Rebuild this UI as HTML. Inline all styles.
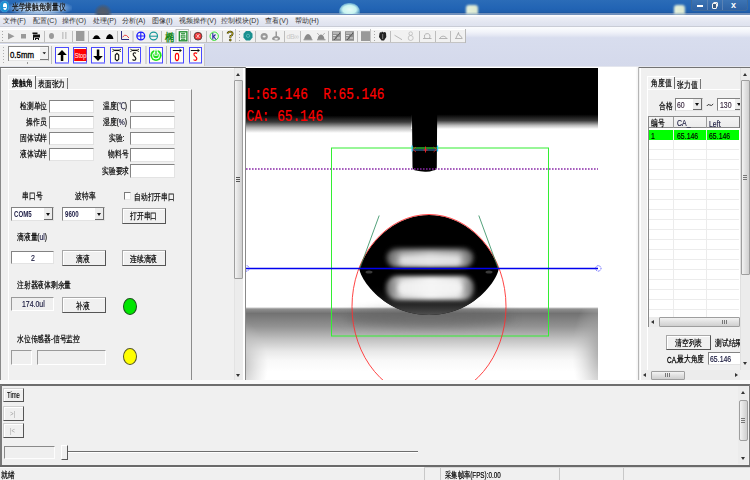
<!DOCTYPE html>
<html><head><meta charset="utf-8">
<style>
*{margin:0;padding:0;box-sizing:border-box}
html,body{width:750px;height:480px;overflow:hidden;background:#f0f0f0;font-family:"Liberation Sans",sans-serif;font-size:8px;color:#000;position:relative}
.a{position:absolute}
.t{position:absolute;white-space:nowrap;font-size:8px;line-height:9px;color:#1a1a1a}
.in{position:absolute;background:#fff;border-top:1px solid #838383;border-left:1px solid #838383;border-right:1px solid #e3e3e3;border-bottom:1px solid #e3e3e3}
.btn{position:absolute;background:#f0f0f0;border:1px solid #a8a8a8;border-right:1.5px solid #555;border-bottom:1.5px solid #555;box-shadow:inset 1px 1px 0 #fff}
.sep{position:absolute;top:30px;width:1px;height:12px;background:#c5c5c5;border-right:1px solid #fff}
.tbb{position:absolute;top:47px;width:14px;height:17px;border:1px solid #5a5aff;background:#fdfdf6}
.c{position:absolute;white-space:nowrap;font-size:9px;line-height:9px;transform:scaleX(.75);transform-origin:0 0;color:#000;-webkit-text-stroke-width:0.2px}
.n{position:absolute;white-space:nowrap;font-size:9.5px;line-height:9px;transform:scaleX(.73);transform-origin:0 0;color:#14143a;-webkit-text-stroke-width:0.15px}
.nb{position:absolute;white-space:nowrap;font-size:8.5px;line-height:9px;transform:scaleX(.72);transform-origin:0 0;color:#1e1e46;font-weight:bold}
</style></head><body>
<!-- TITLE BAR -->
<div class="a" style="left:0;top:0;width:750px;height:14px;background:linear-gradient(180deg,#2b6cb8 0%,#2264b4 60%,#1f5ca8 100%)"></div>
<div class="a" style="left:0;top:12px;width:750px;height:1px;background:#1d58a4;opacity:.8"></div>
<div class="a" style="left:0;top:13px;width:750px;height:1.5px;background:#7190bb"></div>
<div class="a" style="left:94px;top:4px;width:18px;height:12px;border-radius:9px 9px 0 0;background:radial-gradient(circle at 9px 9px,#555b66 0,#4a5a70 40%,rgba(40,90,160,0) 75%)"></div>
<div class="a" style="left:339px;top:3px;width:21px;height:11px;border-radius:10px 10px 2px 2px;background:radial-gradient(ellipse at 50% 60%,#e6fbf8 0,#c8f4f0 45%,rgba(150,220,230,.5) 70%,rgba(43,108,184,0) 100%)"></div>
<div class="a" style="left:466px;top:5px;width:12px;height:9px;border-radius:3px 3px 0 0;background:linear-gradient(90deg,#e8f2dc,#dce8d0);filter:blur(1px)"></div>
<div class="a" style="left:673.5px;top:5px;width:11px;height:9px;border-radius:3px 3px 0 0;background:linear-gradient(90deg,#e8f2dc,#dce8d0);filter:blur(1px)"></div>
<div class="a" style="left:0px;top:1px;width:9px;height:11px;border-radius:50%;background:#1c8fd2;box-shadow:0 0 1px #8ac8f0"></div>
<div class="a" style="left:2.5px;top:3px;width:4px;height:6.5px;border-radius:50% 50% 50% 50%/35% 35% 65% 65%;background:#fff"></div>
<div class="a" style="left:3px;top:6.5px;width:3px;height:1.5px;background:#3aa0e0"></div>
<div class="a" style="left:8px;top:0px;width:64px;height:14px;background:radial-gradient(ellipse 34px 8px at 32px 8px,rgba(235,245,255,.95) 0,rgba(200,225,250,.75) 55%,rgba(43,108,184,0) 100%)"></div>
<div class="c" style="left:11.5px;top:3px;font-size:9px;transform:scaleX(.74);color:#000;text-shadow:0 0 1px rgba(255,255,255,.6)">光学接触角测量仪</div>
<div class="a" style="left:691px;top:0;width:57px;height:11px;border:1px solid #3f6a9a;border-top:none;border-radius:0 0 3px 3px;background:linear-gradient(#3c74b4,#2e62a4)"></div>
<div class="a" style="left:707px;top:0;width:1px;height:10px;background:#5a82b4"></div>
<div class="a" style="left:722px;top:0;width:1px;height:10px;background:#5a82b4"></div>
<div class="a" style="left:697px;top:5px;width:6px;height:2px;background:#fff"></div>
<div class="a" style="left:713px;top:1.5px;width:5px;height:5px;border:1.2px solid #f0f0f0;border-radius:1px"></div><div class="a" style="left:711.5px;top:3px;width:5.5px;height:5.5px;border:1.5px solid #f4f4f4;background:#3a5a80;border-radius:1px"></div>
<div class="t" style="left:731px;top:1px;font-size:9px;line-height:9px;color:#fff;font-weight:bold">x</div>
<!-- MENU -->
<div class="a" style="left:0;top:14.5px;width:750px;height:12.5px;background:linear-gradient(#fdfdfe 0,#fbfbfd 10%,#eceef6 20%,#e3e6f1 60%,#dde1ee 100%)"></div>
<div class="a" style="left:0;top:26px;width:750px;height:1px;background:#c9ccd6"></div>
<div class="t" style="left:3px;top:16px;font-size:7px;color:#333">文件(F)</div>
<div class="t" style="left:33px;top:16px;font-size:7px;color:#333">配置(C)</div>
<div class="t" style="left:62px;top:16px;font-size:7px;color:#333">操作(O)</div>
<div class="t" style="left:93px;top:16px;font-size:7px;color:#333">处理(P)</div>
<div class="t" style="left:122px;top:16px;font-size:7px;color:#333">分析(A)</div>
<div class="t" style="left:152px;top:16px;font-size:7px;color:#333">图像(I)</div>
<div class="t" style="left:179px;top:16px;font-size:7px;color:#333">视频操作(V)</div>
<div class="t" style="left:221px;top:16px;font-size:7px;color:#333">控制模块(D)</div>
<div class="t" style="left:265px;top:16px;font-size:7px;color:#333">查看(V)</div>
<div class="t" style="left:295px;top:16px;font-size:7px;color:#333">帮助(H)</div>
<!-- REBAR -->
<div class="a" style="left:0;top:27px;width:750px;height:40px;background:linear-gradient(#fbfcfe 0,#f2f4fa 12%,#e6e9f4 20%,#d8ddee 27%,#d4d9eb 100%)"></div>

<!-- TOOLBAR 1 -->
<svg class="a" style="left:0;top:28px" width="467" height="16" viewBox="0 0 467 16">
<g transform="translate(0,-28)">
<rect x="0" y="29" width="236" height="14" fill="#f1f1f1"/>
<rect x="236" y="29" width="135" height="14" fill="#f1f1f1"/>
<rect x="371" y="29" width="95" height="14" fill="#f1f1f1"/>
<line x1="0" y1="29.5" x2="466" y2="29.5" stroke="#fff"/>
<line x1="0" y1="42.5" x2="466" y2="42.5" stroke="#c4c4c4"/>
<line x1="235.5" y1="29" x2="235.5" y2="43" stroke="#c4c4c4"/>
<line x1="370.5" y1="29" x2="370.5" y2="43" stroke="#c4c4c4"/>
<line x1="465.5" y1="29" x2="465.5" y2="43" stroke="#b8b8b8"/>
<g fill="#a8a8a8"><rect x="2" y="31" width="1" height="1"/><rect x="2" y="34" width="1" height="1"/><rect x="2" y="37" width="1" height="1"/><rect x="2" y="40" width="1" height="1"/>
<rect x="239" y="31" width="1" height="1"/><rect x="239" y="34" width="1" height="1"/><rect x="239" y="37" width="1" height="1"/><rect x="239" y="40" width="1" height="1"/>
<rect x="374" y="31" width="1" height="1"/><rect x="374" y="34" width="1" height="1"/><rect x="374" y="37" width="1" height="1"/><rect x="374" y="40" width="1" height="1"/></g>
<g stroke="#bdbdbd" stroke-width="1">
<line x1="44.5" y1="31" x2="44.5" y2="42"/><line x1="72.5" y1="31" x2="72.5" y2="42"/><line x1="88.5" y1="31" x2="88.5" y2="42"/><line x1="117.5" y1="31" x2="117.5" y2="42"/><line x1="133" y1="31" x2="133" y2="42"/><line x1="161.5" y1="31" x2="161.5" y2="42"/><line x1="190.5" y1="31" x2="190.5" y2="42"/><line x1="206.5" y1="31" x2="206.5" y2="42"/><line x1="222.5" y1="31" x2="222.5" y2="42"/>
<line x1="255.5" y1="31" x2="255.5" y2="42"/><line x1="284.5" y1="31" x2="284.5" y2="42"/><line x1="300.5" y1="31" x2="300.5" y2="42"/><line x1="328.5" y1="31" x2="328.5" y2="42"/><line x1="357.5" y1="31" x2="357.5" y2="42"/>
<line x1="390.5" y1="31" x2="390.5" y2="42"/><line x1="419.5" y1="31" x2="419.5" y2="42"/><line x1="435.5" y1="31" x2="435.5" y2="42"/><line x1="450.5" y1="31" x2="450.5" y2="42"/>
</g>
<!-- play stop cam -->
<path d="M8 33 L14.5 36.3 L8 39.6Z" fill="#9a9a9a"/>
<rect x="21" y="34" width="5" height="4.5" fill="#9a9a9a"/>
<path d="M32.5 32.5h5v1.5h-5z M33 34.5h7v3h-6v2.5h-1z M35 38h4v2h-1v-1h-2v1h-1z" fill="#111"/>
<ellipse cx="51.5" cy="36" rx="2.5" ry="3" fill="#9a9a9a"/>
<rect x="62" y="32" width="1.6" height="7" fill="#c8c8c8"/><rect x="65" y="32" width="1.6" height="7" fill="#c8c8c8"/>
<rect x="76" y="31" width="8.4" height="10" fill="#9a9a9a"/>
<path d="M92 39 Q93 39 94 36.5 Q96.5 34 99 36.5 Q100 39 101.2 39Z" fill="#000"/>
<path d="M106 39 Q106.5 35 109.7 34 Q113 35 113.4 39Z" fill="#000"/>
<!-- chart -->
<path d="M121.5 31v8.5h7.5" stroke="#2a2a80" fill="none" stroke-width="1"/>
<path d="M122.5 37.3 Q124.5 34 126.5 35.5 T128.8 38" stroke="#e03030" fill="none" stroke-width="0.9"/>
<circle cx="140.8" cy="36" r="3.9" stroke="#1a1aff" stroke-width="1.3" fill="none"/>
<path d="M136.9 36h7.8M140.8 32.1v7.8" stroke="#1a1aff" stroke-width="1.1"/>
<circle cx="153.6" cy="36" r="3.9" stroke="#1a9a9a" stroke-width="1.2" fill="none"/>
<path d="M149.7 36.2h7.8" stroke="#1a9a9a" stroke-width="1.1"/>
<text x="164.8" y="40.6" font-size="11" font-weight="bold" fill="#1a8a1a" font-family="Liberation Sans" textLength="9.5" lengthAdjust="spacingAndGlyphs">椭</text>
<rect x="176" y="29.5" width="12.5" height="13" fill="#fafafa" stroke="#b0b0b0" stroke-width="0.8"/>
<rect x="179.3" y="31.8" width="7.6" height="9" fill="#eaf6ea" stroke="#1a8a2a" stroke-width="1.3"/>
<path d="M181 33.5h4M181.3 35h3.5v3h-3.5z M183 35v3M181 39.5h4.2" stroke="#1a8a2a" stroke-width="0.8" fill="none"/>
<circle cx="198" cy="36.2" r="3.9" fill="#ef3a3a" stroke="#3a3a3a" stroke-width="0.8"/>
<path d="M196.5 34.5l3 3.5M199.5 34l-3 4" stroke="#fff" stroke-width="0.7"/>
<circle cx="214.2" cy="36.2" r="4.2" stroke="#1ee01e" stroke-width="0.9" fill="none"/>
<path d="M212.8 33v6.5M213 37l2.5-2.5M213.5 36.5l2.5 3" stroke="#2a2aa0" stroke-width="1.1" fill="none"/>
<path d="M227.5 33.5 Q228 31.5 230.5 31.6 Q233 32 232.5 34.2 Q232 35.5 230.5 36 L230.3 38" stroke="#1a1a00" stroke-width="1.8" fill="none"/>
<path d="M227.5 33.5 Q228 31.5 230.5 31.6 Q233 32 232.5 34.2 Q232 35.5 230.5 36 L230.3 38" stroke="#e6d020" stroke-width="0.8" fill="none"/>
<circle cx="230.3" cy="40" r="1" fill="#c8b000" stroke="#1a1a00" stroke-width="0.6"/>
<!-- tb1b -->
<path d="M246 31h4l2.5 2.8v3.8L250 40.5h-4l-2.5-2.9v-3.8z" fill="#1a9090"/>
<circle cx="248" cy="35.8" r="1.6" fill="none" stroke="#7ad0d0" stroke-width="0.6"/>
<circle cx="264.2" cy="36.5" r="3.6" fill="#999"/><ellipse cx="264.2" cy="36.5" rx="1.6" ry="1.1" fill="#f1f1f1"/>
<path d="M275.5 31.5h1.5v4.5 Q280.5 37 280 39 Q279.5 40.5 276 40.5 Q272 40.5 272 38.8 Q272 37 275.5 36z" fill="#999"/>
<ellipse cx="276.2" cy="38.8" rx="1.8" ry="0.9" fill="#f1f1f1"/>
<text x="286.5" y="39" font-size="7" fill="#c8c8c8" font-family="Liberation Sans" letter-spacing="-0.5">dB&#8734;</text>
<path d="M304 39.5 Q305 34.5 308 34 Q311 34.5 312 39.5Z" fill="#8a8a8a"/><rect x="303.5" y="39.3" width="9" height="1" fill="#8a8a8a"/>
<path d="M317.5 39.5 Q318 35 321 34.5 Q324 35 324.5 39.5Z" fill="#8a8a8a"/><rect x="317" y="39.3" width="8.5" height="1" fill="#8a8a8a"/>
<path d="M317.2 33l2 2.2M324.8 33l-2 2.2" stroke="#8a8a8a" stroke-width="0.6"/>
<rect x="332" y="31.2" width="9" height="9.6" fill="#8f8f8f"/>
<path d="M333 33h6M333 35.5h3M333 38h2M337 38h3" stroke="#f0f0f0" stroke-width="0.8"/><path d="M334 40l6-7" stroke="#555" stroke-width="1"/>
<rect x="345" y="31.2" width="9" height="9.6" fill="#8f8f8f"/>
<path d="M346 33h6M346 35.5h3M346 38h2M350 38h3" stroke="#f0f0f0" stroke-width="0.8"/><path d="M347 40l6-7" stroke="#555" stroke-width="1"/>
<rect x="361" y="31.2" width="9" height="9.8" fill="#999"/>
<!-- tb1c -->
<path d="M379.5 33.5 Q380 31.5 381.5 32.5 L382 31.5 L383.5 32.5 Q385 31.5 386 33 L386.3 37 L384 40.5 L381.5 40.5 L379 37z" fill="#222"/>
<path d="M382.7 34v5" stroke="#ddd" stroke-width="0.5"/>
<path d="M394.5 35.2l7.5 4.5" stroke="#aaa" stroke-width="0.8"/>
<circle cx="410.7" cy="33.6" r="1.8" fill="none" stroke="#b5b5b5" stroke-width="0.7"/><circle cx="410.7" cy="38" r="2.5" fill="none" stroke="#b5b5b5" stroke-width="0.7"/>
<path d="M423 38.5h8.5M424.8 38.2 Q423.5 33.8 427.2 33.6 Q431 33.8 429.6 38.2" stroke="#999" fill="none" stroke-width="0.7"/>
<path d="M439 38.5h8.5M440 37.8 Q443 34.5 446.5 37.8" stroke="#999" fill="none" stroke-width="0.7"/>
<path d="M455 38.5h7.5M456 38 L458.5 32.5 L459 35 Q461.5 36 462 38" stroke="#999" fill="none" stroke-width="0.7"/>
</g>
</svg>
<!-- TOOLBAR 2 -->
<svg class="a" style="left:0;top:43px" width="206" height="25" viewBox="0 0 206 25">
<g transform="translate(0,-43)">
<rect x="0" y="44" width="205" height="22.5" fill="#f2f2f2"/>
<line x1="0" y1="44.5" x2="205" y2="44.5" stroke="#fcfcfc"/>
<line x1="204.5" y1="44" x2="204.5" y2="66" stroke="#c8c8c8"/>
<g fill="#b0b0b0"><rect x="3" y="47" width="1" height="1"/><rect x="3" y="50" width="1" height="1"/><rect x="3" y="53" width="1" height="1"/><rect x="3" y="56" width="1" height="1"/><rect x="3" y="59" width="1" height="1"/><rect x="3" y="62" width="1" height="1"/></g>
<rect x="8.5" y="46.5" width="40" height="14" fill="#fff" stroke="#8a8a8a" stroke-width="1"/>
<line x1="9" y1="60.5" x2="48.5" y2="60.5" stroke="#e5e5e5"/>
<rect x="40" y="47.5" width="8" height="12.5" fill="#f0f0f0"/>
<line x1="40" y1="59.5" x2="48" y2="59.5" stroke="#777"/>
<path d="M42.5 52.3h3.5l-1.75 2z" fill="#111"/>
<text x="10" y="57.6" font-size="8.8" font-family="Liberation Sans" fill="#000" stroke="#000" stroke-width="0.3" textLength="24" lengthAdjust="spacingAndGlyphs">0.5mm</text>
<rect x="27" y="62" width="1" height="2" fill="#999"/>
<line x1="51.5" y1="46" x2="51.5" y2="64" stroke="#bdbdbd"/>
<line x1="146" y1="46" x2="146" y2="64" stroke="#bdbdbd"/>
<line x1="166.5" y1="46" x2="166.5" y2="64" stroke="#bdbdbd"/>
<g stroke="#4a4aff" stroke-width="1" fill="#fefef4">
<rect x="55.5" y="47.5" width="13" height="15.5"/>
<rect x="73.5" y="47.5" width="13" height="15.5"/>
<rect x="91.5" y="47.5" width="13" height="15.5"/>
<rect x="110.5" y="47.5" width="12" height="15.5"/>
<rect x="128.5" y="47.5" width="12" height="15.5"/>
<rect x="149.5" y="47.5" width="13" height="15.5"/>
<rect x="170.5" y="47.5" width="13" height="15.5"/>
<rect x="189.5" y="47.5" width="12" height="15.5"/>
</g>
<g fill="#9a9aff"><rect x="56" y="62" width="12.5" height="1.5"/><rect x="74" y="62" width="12.5" height="1.5"/><rect x="92" y="62" width="12.5" height="1.5"/><rect x="111" y="62" width="11.5" height="1.5"/><rect x="129" y="62" width="11.5" height="1.5"/><rect x="150" y="62" width="12" height="1.5"/><rect x="171.5" y="62" width="11.5" height="1.5"/><rect x="189.5" y="62" width="11.5" height="1.5"/></g>
<path d="M62 50 L66.8 55 H63.3 V61 H60.8 V55 H57.2Z" fill="#000"/>
<rect x="74.2" y="49" width="12.2" height="12" fill="#ff0000"/>
<text x="74.8" y="57.6" font-size="8" fill="#fff" font-family="Liberation Sans" textLength="11.5" lengthAdjust="spacingAndGlyphs">Stop</text>
<path d="M98 61 L102.8 56 H99.3 V49.5 H96.8 V56 H93.2Z" fill="#000"/>
<path d="M112.3 49.1l2.3 1.3-2.3 1.2M121 49.1l-2.3 1.3 2.3 1.2M114.3 50.4h4.7" stroke="#111" stroke-width="0.8" fill="none"/><path d="M114.3 50.4h4.7" stroke="#111" stroke-width="1.3"/>
<path d="M117 53.3 L118.7 55 V59.2 L117 60.8 L115.3 59.2 V55Z" fill="none" stroke="#111" stroke-width="1.1"/>
<path d="M130.3 49.1l2.3 1.3-2.3 1.2M139 49.1l-2.3 1.3 2.3 1.2M132.3 50.4h4.7" stroke="#111" stroke-width="0.8" fill="none"/><path d="M132.3 50.4h4.7" stroke="#111" stroke-width="1.3"/>
<path d="M136 53.3 Q134.5 52.2 133.3 53.3 Q132.5 55 134.5 56.5 Q136.5 58 135.5 59.7 Q134 60.8 132.5 59.5" stroke="#111" stroke-width="1.1" fill="none"/>
<circle cx="156" cy="55.3" r="5.6" fill="#1ee01e"/>
<circle cx="156" cy="55.6" r="3.3" fill="none" stroke="#ffffff" stroke-width="1.1"/>
<rect x="154.3" y="49.8" width="3.4" height="6" fill="#ffffff"/>
<rect x="155.3" y="50.5" width="1.4" height="4.6" fill="#1ee01e"/>
<path d="M172.8 50.5h8.5M179.5 49.2l1.8 1.3-1.8 1.3" stroke="#111" stroke-width="1" fill="none"/>
<ellipse cx="177" cy="57" rx="1.7" ry="3.6" fill="none" stroke="#ff0000" stroke-width="1.1"/>
<path d="M190.8 50.5h8.5M197.5 49.2l1.8 1.3-1.8 1.3" stroke="#111" stroke-width="1" fill="none"/>
<path d="M197 53.5 Q195.5 52.3 194 53.5 Q193.3 55 195.5 56.6 Q197.5 58 196.5 59.8 Q195 61 193.5 59.7" stroke="#ff0000" stroke-width="1.1" fill="none"/>
</g>
</svg>
<div class="a" style="left:0;top:66px;width:750px;height:1px;background:#e4e6ee"></div>
<!-- LEFT PANEL -->
<div class="a" style="left:0;top:67px;width:246px;height:1px;background:#737373"></div>
<div class="a" style="left:0;top:68px;width:1px;height:312px;background:#8a8a8a"></div>
<div class="a" style="left:1px;top:68px;width:244px;height:1px;background:#fff"></div>
<!-- tabs -->
<div class="a" style="left:8px;top:75px;width:28px;height:15px;background:#f3f3f3;border-top:1px solid #fff;border-left:1px solid #fff"></div>
<div class="a" style="left:35px;top:76px;width:1px;height:14px;background:#6a6a6a"></div>
<div class="a" style="left:36px;top:77px;width:32px;height:1px;background:#fff"></div>
<div class="a" style="left:67px;top:78px;width:1px;height:11px;background:#777"></div>
<div class="c" style="left:12px;top:79px;-webkit-text-stroke-width:0.35px">接触角</div>
<div class="c" style="left:38px;top:80px">表面张力</div>
<!-- tab page -->
<div class="a" style="left:8px;top:89px;width:184px;height:291px;border-left:1px solid #fff;border-top:1px solid #fff;border-right:1px solid #8c8c8c"></div>
<div class="a" style="left:68px;top:89px;width:123px;height:1px;background:#fff"></div>
<!-- labels left col -->
<div class="c" style="left:19.5px;top:102px">检测单位</div>
<div class="c" style="left:26px;top:118px">操作员</div>
<div class="c" style="left:19.5px;top:134px">固体试样</div>
<div class="c" style="left:19.5px;top:150px">液体试样</div>
<div class="in" style="left:49px;top:100px;width:45px;height:13px"></div>
<div class="in" style="left:49px;top:116px;width:45px;height:13px"></div>
<div class="in" style="left:49px;top:132px;width:45px;height:13px"></div>
<div class="in" style="left:49px;top:148px;width:45px;height:13px"></div>
<!-- labels right col -->
<div class="c" style="left:103px;top:102px">温度(<span style="color:#1a1a3a">℃</span>)</div>
<div class="c" style="left:103px;top:118px">湿度(<span style="color:#1a1a3a">%</span>)</div>
<div class="c" style="left:108.5px;top:134px">实验:</div>
<div class="c" style="left:108px;top:150px">物料号</div>
<div class="c" style="left:101.5px;top:166.5px">实验要求</div>
<div class="in" style="left:130px;top:100px;width:45px;height:13px"></div>
<div class="in" style="left:130px;top:116px;width:45px;height:13px"></div>
<div class="in" style="left:130px;top:132px;width:45px;height:13px"></div>
<div class="in" style="left:130px;top:148px;width:45px;height:14px"></div>
<div class="in" style="left:130px;top:164px;width:45px;height:14px"></div>
<!-- serial -->
<div class="c" style="left:21.5px;top:192px">串口号</div>
<div class="c" style="left:75px;top:192px">波特率</div>
<div class="in" style="left:11px;top:207px;width:43px;height:14px"></div>
<div class="nb" style="left:13.7px;top:210px">COM5</div>
<div class="a" style="left:44px;top:208px;width:9px;height:12px;background:#ececec;border-bottom:1px solid #6a6a6a;border-right:1px solid #6a6a6a"></div>
<div class="a" style="left:46px;top:213px;width:0;height:0;border-left:2.5px solid transparent;border-right:2.5px solid transparent;border-top:3px solid #111"></div>
<div class="in" style="left:62px;top:207px;width:43px;height:14px"></div>
<div class="nb" style="left:64.7px;top:210px">9600</div>
<div class="a" style="left:95px;top:208px;width:9px;height:12px;background:#ececec;border-bottom:1px solid #6a6a6a;border-right:1px solid #6a6a6a"></div>
<div class="a" style="left:97px;top:213px;width:0;height:0;border-left:2.5px solid transparent;border-right:2.5px solid transparent;border-top:3px solid #111"></div>
<div class="a" style="left:123.5px;top:192px;width:7px;height:8px;border:1px solid #7a7a7a;border-right-color:#e8e8e8;border-bottom-color:#e8e8e8;background:#fff"></div>
<div class="c" style="left:133.5px;top:192.5px">自动打开串口</div>
<div class="btn" style="left:122px;top:207.5px;width:43.5px;height:16.5px"></div>
<div class="c" style="left:129.5px;top:211.5px">打开串口</div>
<!-- drop volume -->
<div class="c" style="left:17px;top:233px">滴液量(<span style="color:#1e1e46">ul</span>)</div>
<div class="in" style="left:11px;top:251px;width:43px;height:13px"></div>
<div class="n" style="left:31px;top:253px">2</div>
<div class="btn" style="left:62px;top:250px;width:43.5px;height:16px"></div>
<div class="c" style="left:75.5px;top:254.5px">滴液</div>
<div class="btn" style="left:122px;top:250px;width:43.5px;height:16px"></div>
<div class="c" style="left:129.5px;top:254.5px">连续滴液</div>
<!-- syringe -->
<div class="c" style="left:16.5px;top:281px">注射器液体剩余量</div>
<div class="a" style="left:11px;top:297px;width:43px;height:14px;background:#efefef;border-top:1px solid #9a9a9a;border-left:1px solid #9a9a9a;border-right:1px solid #fff;border-bottom:1px solid #fff"></div>
<div class="n" style="left:21.7px;top:299px">174.0ul</div>
<div class="btn" style="left:62px;top:296.5px;width:43.5px;height:16.5px"></div>
<div class="c" style="left:75.5px;top:301.5px">补液</div>
<div class="a" style="left:123px;top:298px;width:14px;height:17px;border-radius:50%;background:#00e600;border:1.5px solid #1f4f1f"></div>
<!-- water sensor -->
<div class="c" style="left:16.5px;top:334.5px">水位传感器-信号监控</div>
<div class="a" style="left:11px;top:350px;width:21px;height:15px;background:#efefef;border-top:1px solid #9a9a9a;border-left:1px solid #9a9a9a;border-right:1px solid #fff;border-bottom:1px solid #fff"></div>
<div class="a" style="left:37px;top:350px;width:69px;height:15px;background:#efefef;border-top:1px solid #9a9a9a;border-left:1px solid #9a9a9a;border-right:1px solid #fff;border-bottom:1px solid #fff"></div>
<div class="a" style="left:123px;top:348px;width:14px;height:17px;border-radius:50%;background:#ffff00;border:1.5px solid #55552a"></div>
<!-- scrollbar -->
<div class="a" style="left:234px;top:68px;width:9px;height:312px;background:#ececec;border-left:1px solid #e3e3e3"></div>
<div class="a" style="left:236px;top:73px;width:0;height:0;border-left:2.5px solid transparent;border-right:2.5px solid transparent;border-bottom:3px solid #333"></div>
<div class="a" style="left:234px;top:80px;width:9px;height:199px;border:1px solid #9e9e9e;border-radius:1px;background:linear-gradient(90deg,#f3f3f3,#e0e0e0 50%,#cfcfcf)"></div>
<div class="a" style="left:235.8px;top:176.5px;width:4px;height:5px;background:repeating-linear-gradient(180deg,#555 0,#555 1px,transparent 1px,transparent 2px)"></div>
<div class="a" style="left:236px;top:373.5px;width:0;height:0;border-left:2.5px solid transparent;border-right:2.5px solid transparent;border-top:3px solid #333"></div>
<div class="a" style="left:243px;top:68px;width:2px;height:312px;background:#fff"></div>
<div class="a" style="left:245px;top:67px;width:1px;height:313px;background:#8a8a8a"></div>
<div class="a" style="left:0;top:380px;width:750px;height:4px;background:#fafafa"></div>
<div class="a" style="left:0;top:384px;width:750px;height:1px;background:#6e6e6e"></div>
<!-- IMAGE AREA -->
<svg class="a" style="left:246px;top:67px" width="393" height="313" viewBox="246 67 393 313">
<defs>
<linearGradient id="topg" x1="0" y1="0" x2="0" y2="1" gradientUnits="objectBoundingBox">
<stop offset="0" stop-color="#000"/><stop offset="0.73" stop-color="#000"/><stop offset="0.83" stop-color="#3a3a3a"/><stop offset="0.92" stop-color="#b8b8b8"/><stop offset="1" stop-color="#fff"/>
</linearGradient>
<linearGradient id="topg2" x1="0" y1="0" x2="0" y2="1"><stop offset="0" stop-color="#000"/><stop offset="0.76" stop-color="#000"/><stop offset="0.86" stop-color="#3a3a3a"/><stop offset="0.94" stop-color="#bbb"/><stop offset="1" stop-color="#fff"/></linearGradient>
<linearGradient id="subg" x1="0" y1="307" x2="0" y2="372" gradientUnits="userSpaceOnUse">
<stop offset="0" stop-color="#fff"/><stop offset="0.03" stop-color="#909090"/><stop offset="0.1" stop-color="#727272"/><stop offset="0.3" stop-color="#929292"/><stop offset="0.5" stop-color="#c2c2c2"/><stop offset="0.68" stop-color="#e8e8e8"/><stop offset="0.82" stop-color="#f8f8f8"/><stop offset="1" stop-color="#fff"/>
</linearGradient>
<radialGradient id="subr" cx="0" cy="0" r="1" gradientUnits="userSpaceOnUse" gradientTransform="translate(606 352) scale(34 62)">
<stop offset="0" stop-color="#888" stop-opacity="0.9"/><stop offset="0.5" stop-color="#aaa" stop-opacity="0.5"/><stop offset="1" stop-color="#ccc" stop-opacity="0"/>
</radialGradient>
<radialGradient id="subl" cx="0" cy="0" r="1" gradientUnits="userSpaceOnUse" gradientTransform="translate(238 365) scale(30 45)">
<stop offset="0" stop-color="#9a9a9a" stop-opacity="0.8"/><stop offset="0.5" stop-color="#b8b8b8" stop-opacity="0.45"/><stop offset="1" stop-color="#c8c8c8" stop-opacity="0"/>
</radialGradient>
<linearGradient id="dropbot" x1="0" y1="285" x2="0" y2="316" gradientUnits="userSpaceOnUse">
<stop offset="0" stop-color="#000" stop-opacity="0"/><stop offset="0.45" stop-color="#1a1a1a" stop-opacity="0.8"/><stop offset="0.8" stop-color="#3a3a3a" stop-opacity="1"/><stop offset="1" stop-color="#555" stop-opacity="1"/>
</linearGradient>
<filter id="bl1" x="-30%" y="-80%" width="160%" height="260%"><feGaussianBlur stdDeviation="3"/></filter><filter id="bl3" x="-30%" y="-150%" width="160%" height="400%"><feGaussianBlur stdDeviation="5"/></filter><filter id="bl0" x="-10%" y="-100%" width="120%" height="300%"><feGaussianBlur stdDeviation="0.6"/></filter>
<filter id="bl2" x="-30%" y="-80%" width="160%" height="260%"><feGaussianBlur stdDeviation="2"/></filter>
</defs>
<rect x="246" y="67" width="393" height="313" fill="#fff"/>
<!-- top black band -->
<rect x="246" y="68" width="166" height="65" fill="url(#topg)"/>
<rect x="411" y="68" width="187" height="61" fill="url(#topg2)"/>
<!-- substrate -->
<rect x="246" y="307" width="352" height="73" fill="url(#subg)" filter="url(#bl0)"/>
<rect x="246" y="308" width="352" height="72" fill="url(#subr)"/>
<rect x="246" y="308" width="352" height="72" fill="url(#subl)"/>
<ellipse id="undrop" cx="429" cy="318" rx="85" ry="9" fill="#5a5a5a" filter="url(#bl3)" opacity="0.5"/>
<!-- needle -->
<path d="M411.5 68 H437.5 L436.8 167.5 Q436.5 170.5 433 170.5 Q430 172 425 171.8 Q420 171.5 416 170.5 Q412.8 170.2 412.5 167Z" fill="#000"/>
<!-- drop -->
<path d="M359.3 268 A77 92 0 0 1 498.7 268 C498.5 275 489 291 471 303 C459 311 443 315 429 315 C415 315 399 311 387 303 C369 291 359.5 275 359.3 268Z" fill="#000"/>
<path d="M359.3 268 A77 92 0 0 1 498.7 268 C498.5 275 489 291 471 303 C459 311 443 315 429 315 C415 315 399 311 387 303 C369 291 359.5 275 359.3 268Z" fill="url(#dropbot)"/>
<!-- highlights -->
<defs>
<linearGradient id="hlx" x1="0" y1="0" x2="1" y2="0">
<stop offset="0" stop-color="#555"/><stop offset="0.18" stop-color="#bdbdbd"/><stop offset="0.5" stop-color="#dedede"/><stop offset="0.82" stop-color="#c8c8c8"/><stop offset="1" stop-color="#555"/>
</linearGradient>
<linearGradient id="hltop" x1="0" y1="0" x2="0" y2="1"><stop offset="0" stop-color="#000" stop-opacity="0.45"/><stop offset="1" stop-color="#000" stop-opacity="0"/></linearGradient>
<linearGradient id="hlx2" x1="0" y1="0" x2="1" y2="0">
<stop offset="0" stop-color="#666"/><stop offset="0.18" stop-color="#d0d0d0"/><stop offset="0.5" stop-color="#f4f4f4"/><stop offset="0.82" stop-color="#e0e0e0"/><stop offset="1" stop-color="#666"/>
</linearGradient>
</defs>
<rect x="386.5" y="248.5" width="87" height="18.5" rx="9" ry="8.5" fill="url(#hlx)" filter="url(#bl2)"/>
<rect x="400" y="256" width="60" height="9" rx="4" fill="#e8e8e8" opacity="0.75" filter="url(#bl2)"/>
<rect x="386" y="246" width="88" height="10" fill="url(#hltop)" filter="url(#bl2)"/>
<rect x="386" y="276" width="88" height="24" rx="11" ry="11" fill="url(#hlx2)" filter="url(#bl2)"/>
<rect x="398" y="281" width="64" height="14" rx="6" fill="#f6f6f6" opacity="0.8" filter="url(#bl2)"/>
<ellipse cx="369" cy="272" rx="3.5" ry="1.6" fill="#3a3a3a" filter="url(#bl0)"/>
<ellipse cx="489" cy="272" rx="3.5" ry="1.6" fill="#3a3a3a" filter="url(#bl0)"/>
<!-- text -->
<text x="246.5" y="99" font-family="Liberation Mono" font-size="16.5" fill="#ff0000" textLength="138" lengthAdjust="spacingAndGlyphs" stroke="#ff0000" stroke-width="0.2">L:65.146&#160;&#160;R:65.146</text>
<text x="246.5" y="121" font-family="Liberation Mono" font-size="16.5" fill="#ff0000" textLength="76.6" lengthAdjust="spacingAndGlyphs" stroke="#ff0000" stroke-width="0.2">CA:&#160;65.146</text>
<!-- purple dotted -->
<line x1="246" y1="169" x2="598" y2="169" stroke="#8a2aa8" stroke-width="1.3" stroke-dasharray="1.6 1.4"/>
<!-- green rect -->
<rect x="331.5" y="148" width="217" height="188" fill="none" stroke="#33ee33" stroke-width="1"/>
<!-- needle marks -->
<line x1="412" y1="148" x2="437" y2="148" stroke="#228822" stroke-width="1.5"/>
<line x1="413" y1="150" x2="437" y2="150" stroke="#2a6a9a" stroke-width="1.3"/>
<path d="M425.5 146.5v6M423.5 150h4" stroke="#ff2020" stroke-width="0.9"/>
<path d="M416 147l-3 2.5 3 2.5M433.5 147l3 2.5-3 2.5" stroke="#ff2020" stroke-width="0.7" fill="none"/>
<rect x="411.5" y="145.5" width="1.2" height="6" fill="#30d0ff"/><rect x="437" y="145.5" width="1.2" height="6" fill="#30d0ff"/>
<!-- red ellipse -->
<ellipse cx="429" cy="306.5" rx="77" ry="92" fill="none" stroke="#ff3030" stroke-width="0.9"/>
<!-- blue line -->
<line x1="246" y1="268.5" x2="598" y2="268.5" stroke="#0000ee" stroke-width="1.5"/>
<circle cx="598.3" cy="268.4" r="2.7" fill="none" stroke="#2020ff" stroke-width="0.8" stroke-dasharray="1 0.8"/>
<circle cx="246.5" cy="268.4" r="2.7" fill="none" stroke="#2020ff" stroke-width="0.8" stroke-dasharray="1 0.8"/>
<!-- tangents -->
<line x1="360" y1="268" x2="379.2" y2="215.5" stroke="#2a8a5a" stroke-width="0.8"/>
<line x1="498" y1="268" x2="478.8" y2="215.5" stroke="#2a8a5a" stroke-width="0.8"/>
<!-- borders -->

<rect x="636.5" y="67" width="2" height="313" fill="#f6f6f6"/>
<rect x="638.5" y="67" width="1.5" height="313" fill="#707070"/>
</svg>
<!-- RIGHT PANEL -->
<div class="a" style="left:639px;top:67px;width:111px;height:1px;background:#737373"></div>
<div class="a" style="left:640px;top:68px;width:110px;height:312px;background:#f0f0f0;border-left:1px solid #fff"></div>
<!-- tabs -->
<div class="a" style="left:647px;top:76px;width:28px;height:14px;background:#f3f3f3;border-top:1px solid #fff;border-left:1px solid #fff"></div>
<div class="a" style="left:674px;top:77px;width:1px;height:13px;background:#6a6a6a"></div>
<div class="a" style="left:675px;top:78px;width:26px;height:1px;background:#fff"></div>
<div class="a" style="left:700px;top:79px;width:1px;height:10px;background:#777"></div>
<div class="c" style="left:650.5px;top:79px">角度值</div>
<div class="c" style="left:677px;top:80.5px">张力值</div>
<div class="a" style="left:647px;top:89px;width:93px;height:1px;background:#fff"></div>
<div class="a" style="left:647px;top:89px;width:1px;height:291px;background:#fff"></div>
<!-- 合格 -->
<div class="c" style="left:658.5px;top:101.5px">合格</div>
<div class="in" style="left:674.5px;top:98px;width:28px;height:13px"></div>
<div class="n" style="left:677px;top:100.3px;color:#3a2a40">60</div>
<div class="a" style="left:693px;top:99px;width:9px;height:11px;background:#ececec;border-bottom:1px solid #6a6a6a;border-right:1px solid #6a6a6a"></div>
<div class="a" style="left:695px;top:103px;width:0;height:0;border-left:2.5px solid transparent;border-right:2.5px solid transparent;border-top:3px solid #111"></div>
<svg class="a" style="left:706px;top:102px" width="8" height="6"><path d="M0.8 4 Q2 1.6 3.8 3 Q5.6 4.4 7.2 2" stroke="#333" stroke-width="1" fill="none"/></svg>
<div class="in" style="left:716.5px;top:98px;width:24px;height:13px;border-right:none"></div>
<div class="n" style="left:719.6px;top:100px;color:#3a2a40">130</div>
<div class="a" style="left:735px;top:99px;width:5px;height:11px;background:#ececec;border-bottom:1px solid #6a6a6a"></div>
<div class="a" style="left:737px;top:103px;width:0;height:0;border-left:2.5px solid transparent;border-right:2.5px solid transparent;border-top:3px solid #111"></div>
<!-- table -->
<div class="a" style="left:647.5px;top:116px;width:92px;height:211px;background:#fff;border-left:1px solid #8a8a8a;border-top:1px solid #8a8a8a"></div>
<div class="a" style="left:648.5px;top:117px;width:90.5px;height:11px;background:linear-gradient(#f4f4f4,#ececec);border-bottom:1px solid #8a8a8a"></div>
<div class="a" style="left:672.5px;top:117px;width:1px;height:11px;background:#9a9a9a"></div>
<div class="a" style="left:705.5px;top:117px;width:1px;height:11px;background:#9a9a9a"></div>
<div class="a" style="left:738.5px;top:117px;width:1px;height:11px;background:#777"></div>
<div class="c" style="left:651px;top:119px">编号</div>
<div class="n" style="left:676.7px;top:118px">CA_</div>
<div class="n" style="left:709.3px;top:119px">Left</div>
<div class="a" style="left:648.5px;top:129.5px;width:90.5px;height:10.5px;background:#00ff00"></div>
<div class="n" style="left:651px;top:131.4px;color:#000">1</div>
<div class="n" style="left:676.7px;top:131.4px;color:#000">65.146</div>
<div class="n" style="left:709.3px;top:131.4px;color:#000">65.146</div>
<div class="a" style="left:648.5px;top:140px;width:90.5px;height:176px;background:repeating-linear-gradient(180deg,#fff 0,#fff 9px,#ececec 9px,#ececec 10px)"></div>
<div class="a" style="left:672.5px;top:129.5px;width:1px;height:187px;background:#ececec"></div>
<div class="a" style="left:705.5px;top:129.5px;width:1px;height:187px;background:#ececec"></div>
<!-- table hscroll -->
<div class="a" style="left:648.5px;top:316.5px;width:91px;height:10.5px;background:#ececec"></div>
<div class="a" style="left:651px;top:320px;width:0;height:0;border-top:2.5px solid transparent;border-bottom:2.5px solid transparent;border-right:3px solid #333"></div>
<div class="a" style="left:658.5px;top:317px;width:81px;height:9.5px;border:1px solid #9e9e9e;border-radius:1px;background:linear-gradient(#f3f3f3,#e0e0e0 50%,#cfcfcf)"></div>
<div class="a" style="left:722px;top:319.5px;width:5px;height:4px;background:repeating-linear-gradient(90deg,#777 0,#777 1px,transparent 1px,transparent 2px)"></div>
<!-- buttons -->
<div class="btn" style="left:665.5px;top:335px;width:45px;height:15px"></div>
<div class="c" style="left:674.5px;top:339px">清空列表</div>
<div class="c" style="left:715px;top:339px">测试结果</div>
<div class="n" style="left:666.5px;top:354.5px;transform:scaleX(.68);color:#000;-webkit-text-stroke-width:0.3px">CA.</div>
<div class="c" style="left:676.5px;top:355px">最大角度</div>
<div class="in" style="left:708px;top:351.5px;width:33px;height:13px;border-right:none"></div>
<div class="n" style="left:710.4px;top:354.2px">65.146</div>
<!-- panel hscroll -->
<div class="a" style="left:641px;top:370px;width:99px;height:10px;background:#ececec"></div>
<div class="a" style="left:643px;top:373px;width:0;height:0;border-top:2.5px solid transparent;border-bottom:2.5px solid transparent;border-right:3px solid #333"></div>
<div class="a" style="left:650.5px;top:370.5px;width:34.5px;height:9.5px;border:1px solid #9e9e9e;border-radius:1px;background:linear-gradient(#f3f3f3,#e0e0e0 50%,#cfcfcf)"></div>
<div class="a" style="left:665px;top:373px;width:5px;height:4px;background:repeating-linear-gradient(90deg,#777 0,#777 1px,transparent 1px,transparent 2px)"></div>
<div class="a" style="left:734.5px;top:373px;width:0;height:0;border-top:2.5px solid transparent;border-bottom:2.5px solid transparent;border-left:3px solid #333"></div>
<!-- vscroll -->
<div class="a" style="left:740px;top:68px;width:10px;height:302px;background:#ececec;border-left:1px solid #e0e0e0"></div>
<div class="a" style="left:742.5px;top:72.5px;width:0;height:0;border-left:2.5px solid transparent;border-right:2.5px solid transparent;border-bottom:3px solid #333"></div>
<div class="a" style="left:740.5px;top:80px;width:9px;height:194.5px;border:1px solid #9e9e9e;border-radius:1px;background:linear-gradient(90deg,#f3f3f3,#e0e0e0 50%,#cfcfcf)"></div>
<div class="a" style="left:743px;top:174.5px;width:4px;height:5px;background:repeating-linear-gradient(180deg,#777 0,#777 1px,transparent 1px,transparent 2px)"></div>
<div class="a" style="left:742.5px;top:362px;width:0;height:0;border-left:2.5px solid transparent;border-right:2.5px solid transparent;border-top:3px solid #333"></div>
<div class="a" style="left:740px;top:370px;width:10px;height:10px;background:#f0f0f0"></div>
<!-- BOTTOM PANEL -->
<div class="a" style="left:0;top:384px;width:750px;height:1.5px;background:#6e6e6e"></div>
<div class="a" style="left:0;top:385px;width:1.5px;height:80px;background:#7a7a7a"></div>
<div class="a" style="left:748.5px;top:385px;width:1.5px;height:80px;background:#7a7a7a"></div>
<div class="a" style="left:0;top:465px;width:750px;height:1.5px;background:#6a6a6a"></div>
<div class="a" style="left:0;top:466.5px;width:750px;height:1px;background:#fafafa"></div>
<div class="btn" style="left:3px;top:387.5px;width:21px;height:14.5px;border-top-color:#d0d0d0;border-left-color:#d0d0d0"></div>
<div class="n" style="left:7px;top:390px;color:#000;transform:scaleX(.62)">Time</div>
<div class="btn" style="left:3px;top:406px;width:21px;height:14.5px;border-top-color:#d0d0d0;border-left-color:#d0d0d0"></div>
<div class="t" style="left:10px;top:409.5px;font-size:7.5px;line-height:8px;color:#a0a0a0;transform:scaleX(.8);transform-origin:0 0">&gt;|</div>
<div class="btn" style="left:3px;top:423px;width:21px;height:15px;border-top-color:#d0d0d0;border-left-color:#d0d0d0"></div>
<div class="t" style="left:10px;top:427px;font-size:7.5px;line-height:8px;color:#a0a0a0;transform:scaleX(.8);transform-origin:0 0">|&lt;</div>
<div class="a" style="left:4px;top:445.5px;width:50.5px;height:13.5px;background:#efefef;border-top:1px solid #8a8a8a;border-left:1px solid #8a8a8a;border-right:1px solid #fdfdfd;border-bottom:1px solid #fdfdfd"></div>
<div class="a" style="left:61px;top:450.5px;width:357px;height:1.5px;background:#6e6e6e"></div>
<div class="a" style="left:61px;top:452px;width:357px;height:1px;background:#fff"></div>
<div class="a" style="left:61px;top:445px;width:7px;height:14.5px;background:#f0f0f0;border-top:1px solid #fff;border-left:1px solid #fff;border-right:1px solid #5a5a5a;border-bottom:1px solid #5a5a5a"></div>
<!-- bottom vscroll -->
<div class="a" style="left:738px;top:386px;width:9.5px;height:78px;background:#ececec"></div>
<div class="a" style="left:740.5px;top:391px;width:0;height:0;border-left:2.5px solid transparent;border-right:2.5px solid transparent;border-bottom:3px solid #333"></div>
<div class="a" style="left:738.5px;top:399.5px;width:9px;height:41px;border:1px solid #9e9e9e;border-radius:2px;background:linear-gradient(90deg,#f3f3f3,#e0e0e0 50%,#cfcfcf)"></div>
<div class="a" style="left:741px;top:417.5px;width:4px;height:5px;background:repeating-linear-gradient(180deg,#777 0,#777 1px,transparent 1px,transparent 2px)"></div>
<div class="a" style="left:740.5px;top:457px;width:0;height:0;border-left:2.5px solid transparent;border-right:2.5px solid transparent;border-top:3px solid #333"></div>
<!-- STATUS -->
<div class="c" style="left:1px;top:470.5px">就绪</div>
<div class="a" style="left:424px;top:467px;width:1px;height:13px;background:#c8c8c8"></div>
<div class="a" style="left:440px;top:467px;width:1px;height:13px;background:#c8c8c8"></div>
<div class="a" style="left:559px;top:467px;width:1px;height:13px;background:#c8c8c8"></div>
<div class="a" style="left:623px;top:467px;width:1px;height:13px;background:#c8c8c8"></div>
<div class="a" style="left:424px;top:467px;width:326px;height:1px;background:#d8d8d8"></div>
<div class="c" style="left:445px;top:470.5px;transform:scaleX(.7)">采集帧率(FPS):0.00</div>
</body></html>
